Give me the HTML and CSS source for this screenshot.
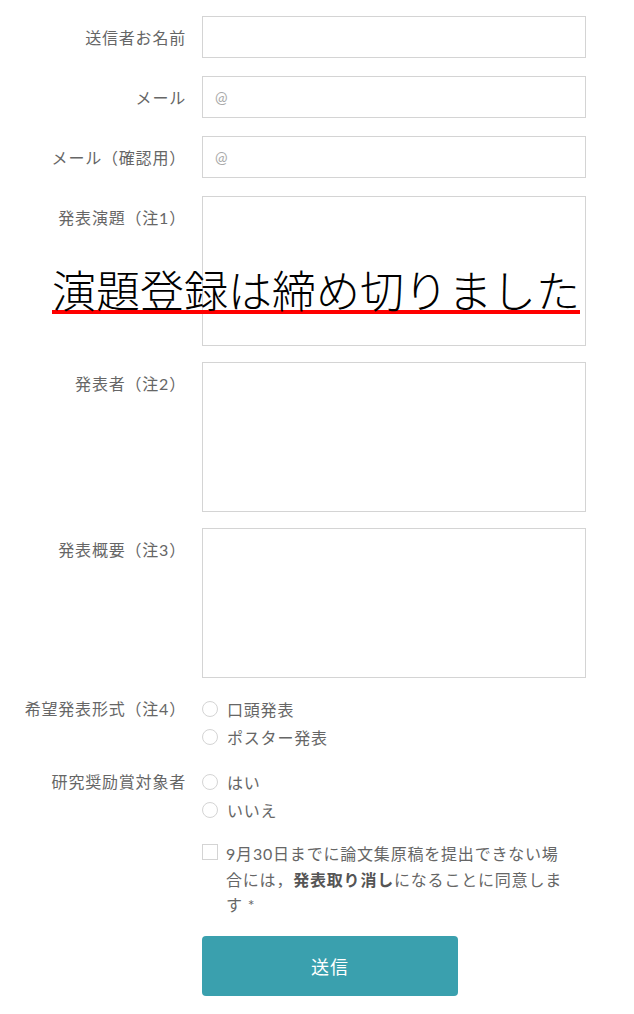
FILE: index.html
```html
<!DOCTYPE html>
<html lang="ja">
<head>
    <meta charset="UTF-8">
    <meta name="viewport" content="width=device-width, initial-scale=1.0">
    <title>演題登録フォーム</title>
    <link rel="stylesheet" href="styles.css">
</head>
<body>
    <form class="entry-form">
        <div class="row">
            <label class="row-label" for="sender">送信者お名前</label>
            <input class="field" type="text" id="sender">
        </div>

        <div class="row">
            <label class="row-label" for="mail">メール</label>
            <input class="field" type="email" id="mail" placeholder="@">
        </div>

        <div class="row">
            <label class="row-label" for="mail2">メール（確認用）</label>
            <input class="field" type="email" id="mail2" placeholder="@">
        </div>

        <div class="row row-area">
            <label class="row-label" for="title">発表演題（注1）</label>
            <textarea class="field area" id="title"></textarea>
        </div>

        <div class="row row-area">
            <label class="row-label" for="authors">発表者（注2）</label>
            <textarea class="field area" id="authors"></textarea>
        </div>

        <div class="row row-area">
            <label class="row-label" for="summary">発表概要（注3）</label>
            <textarea class="field area" id="summary"></textarea>
        </div>

        <div class="row row-choice">
            <span class="row-label">希望発表形式（注4）</span>
            <div class="choices">
                <label class="choice"><input type="radio" name="style"><span>口頭発表</span></label>
                <label class="choice"><input type="radio" name="style"><span>ポスター発表</span></label>
            </div>
        </div>

        <div class="row row-choice">
            <span class="row-label">研究奨励賞対象者</span>
            <div class="choices">
                <label class="choice"><input type="radio" name="award"><span>はい</span></label>
                <label class="choice"><input type="radio" name="award"><span>いいえ</span></label>
            </div>
        </div>

        <div class="row row-agree">
            <span class="row-label"></span>
            <label class="agree">
                <input type="checkbox">
                <span class="agree-text">9月30日までに論文集原稿を提出できない場合には，<b>発表取り消し</b>になることに同意します *</span>
            </label>
        </div>

        <div class="row row-submit">
            <span class="row-label"></span>
            <button type="button" class="submit">送信</button>
        </div>

        <!-- 締め切り表示 -->
        <p class="closed">演題登録は締め切りました</p>
    </form>
</body>
</html>
```

FILE: styles.css
```css
body {
    margin: 0;
    background: #fff;
    font-family: Lato, "Noto Sans CJK JP", sans-serif;
    color: #666;
}

.entry-form {
    position: relative;
    width: 586px;
    padding-top: 16px;
}

.row {
    display: grid;
    grid-template-columns: 186px 384px;
    column-gap: 16px;
    margin-bottom: 18px;
}

.row-area {
    margin-bottom: 16px;
}

.row-label {
    text-align: right;
    font-size: 16px;
    letter-spacing: 0.8px;
    line-height: 26px;
    padding-top: 9px;
    color: #666;
}

.field {
    box-sizing: border-box;
    width: 384px;
    height: 42px;
    margin: 0;
    padding: 0 12px;
    border: 1px solid #d4d4d4;
    border-radius: 0;
    background: #fff;
    font-family: inherit;
    font-size: 15px;
    color: #555;
}

.field::placeholder {
    color: #aaa;
}

.area {
    height: 150px;
    resize: none;
    display: block;
}

.row-choice {
    margin-top: 17px;
    margin-bottom: 16px;
}

.row-choice .row-label {
    padding-top: 0;
    line-height: 28px;
}

.choices {
    display: flex;
    flex-direction: column;
}

.choice {
    display: flex;
    align-items: center;
    height: 28px;
    font-size: 16px;
    letter-spacing: 0.8px;
}

.choice input,
.agree input {
    appearance: none;
    box-sizing: border-box;
    width: 16px;
    height: 16px;
    margin: 0 9px 0 0;
    border: 1px solid #d4d4d4;
    background: #fff;
    flex: none;
}

.choice input {
    border-radius: 50%;
}

.row-agree {
    margin-top: 2px;
}

.agree {
    display: flex;
    align-items: flex-start;
    font-size: 16px;
    letter-spacing: 0.8px;
    line-height: 25.5px;
    padding-right: 16px;
}

.agree-text {
    padding-top: 1px;
}

.agree input {
    margin-top: 4px;
    margin-right: 8px;
}

.agree b {
    color: #555;
}

.row-submit {
    margin-top: 18px;
}

.submit {
    width: 256px;
    height: 60px;
    border: none;
    border-radius: 4px;
    background: #3aa0ae;
    color: #fff;
    font-family: inherit;
    font-size: 18px;
    letter-spacing: 1px;
    cursor: pointer;
}

.closed {
    position: absolute;
    left: 52px;
    top: 269px;
    margin: 0;
    font-family: "Noto Sans CJK JP", sans-serif;
    font-weight: 300;
    font-size: 44px;
    line-height: 41px;
    color: #000;
    white-space: nowrap;
    border-bottom: 4px solid #f00;
}
```
